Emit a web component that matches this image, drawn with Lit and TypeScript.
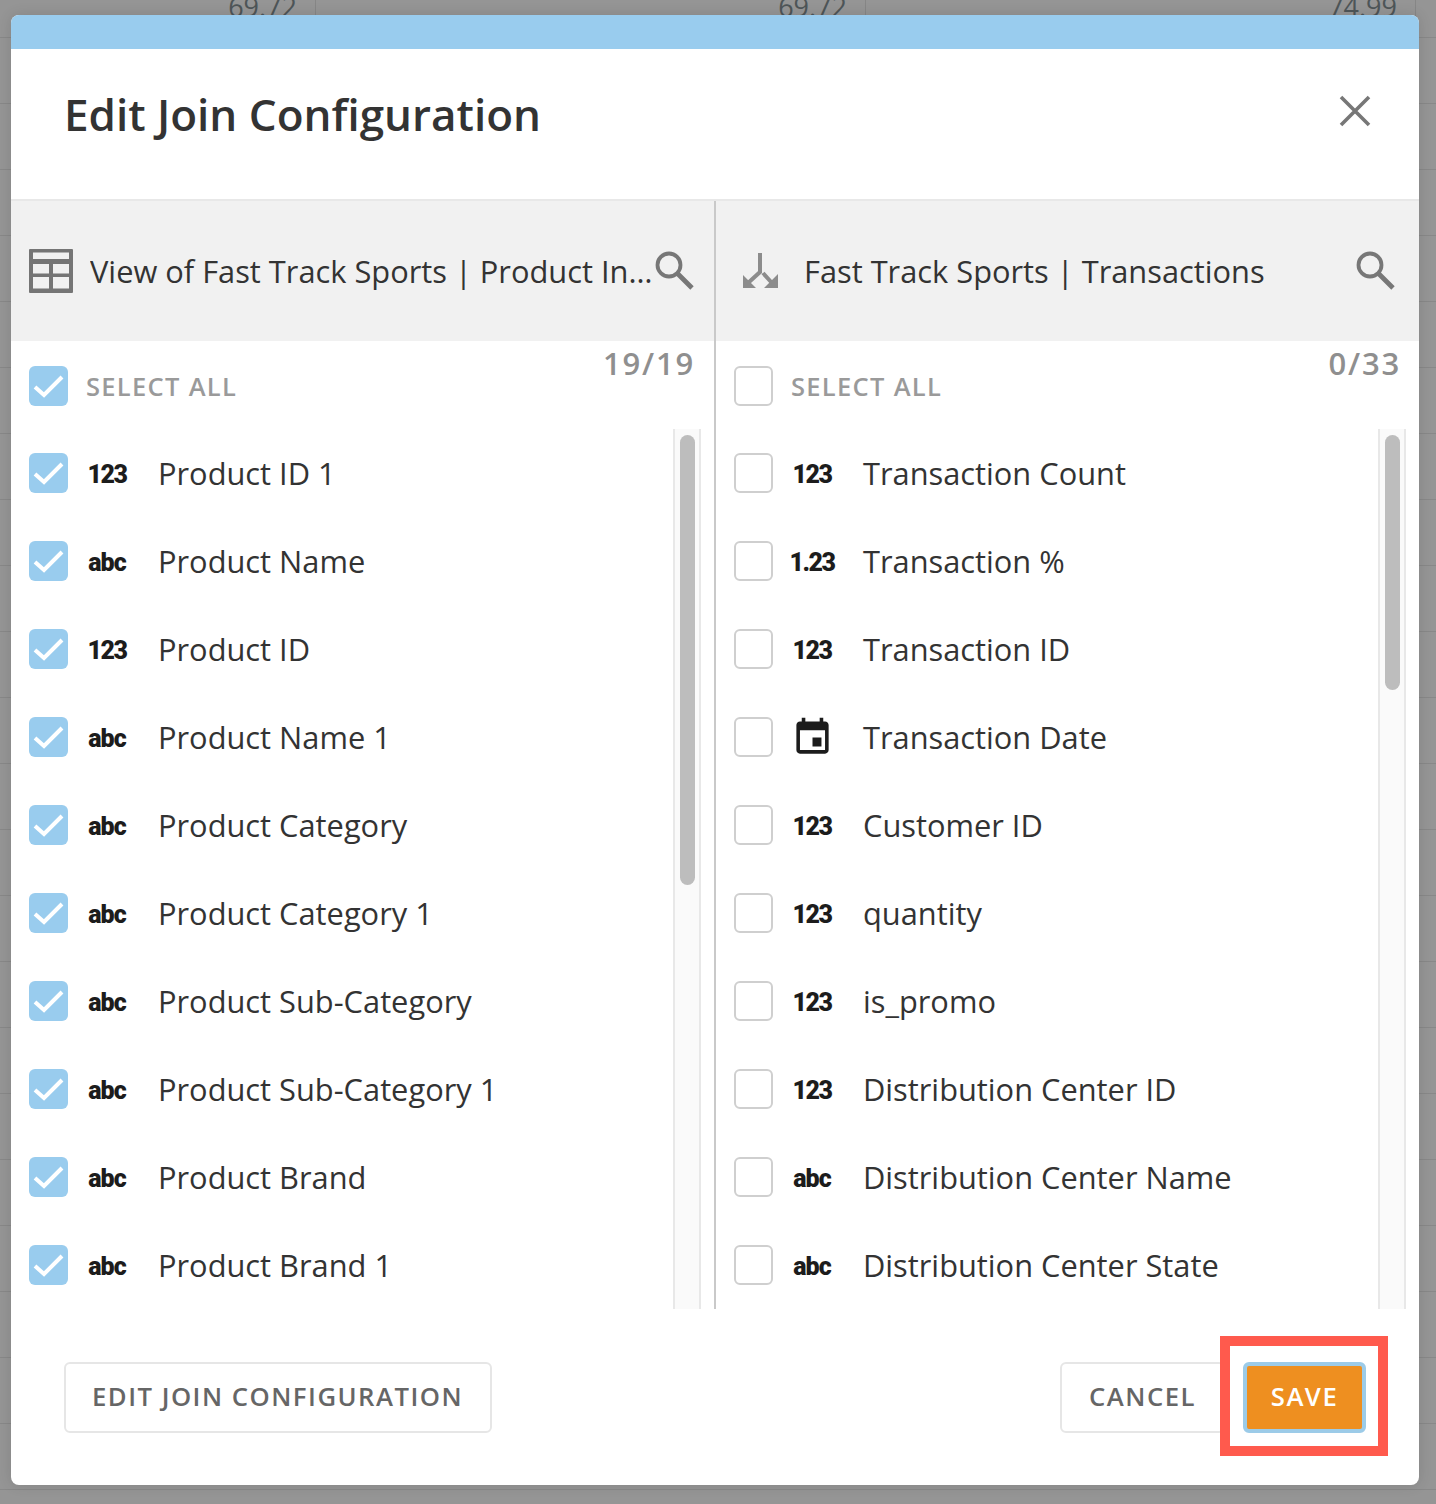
import { LitElement, html, css, svg } from "lit";
import { customElement } from "lit/decorators.js";

type Field = [string, string];
const left: Field[] = [
  ["123", "Product ID 1"], ["abc", "Product Name"], ["123", "Product ID"], ["abc", "Product Name 1"],
  ["abc", "Product Category"], ["abc", "Product Category 1"], ["abc", "Product Sub-Category"],
  ["abc", "Product Sub-Category 1"], ["abc", "Product Brand"], ["abc", "Product Brand 1"],
];
const right: Field[] = [
  ["123", "Transaction Count"], ["1.23", "Transaction %"], ["123", "Transaction ID"], ["date", "Transaction Date"],
  ["123", "Customer ID"], ["123", "quantity"], ["123", "is_promo"], ["123", "Distribution Center ID"],
  ["abc", "Distribution Center Name"], ["abc", "Distribution Center State"],
];

const searchIcon = html`<svg class="search" width="40" height="40" viewBox="0 0 40 40" fill="none" stroke="#777" aria-hidden="true">
  <circle cx="14" cy="14" r="11.500" stroke-width="3.800"/><path d="M22.500 22.500 L37 37" stroke-width="4.800"/></svg>`;
const tableIcon = html`<svg class="src" width="44" height="44" viewBox="0 0 44 44" aria-hidden="true">
  <path fill="#757575" fill-rule="evenodd" d="M0 1a1 1 0 0 1 1-1h42a1 1 0 0 1 1 1v42a1 1 0 0 1-1 1H1a1 1 0 0 1-1-1V1zM4 3.500v6.500h36V3.500H4zM4 15v9.500h16V15H4zm20 0v9.500h16V15H24zM4 28v11.500h16V28H4zm20 0v11.500h16V28H24z"/></svg>`;
const mergeIcon = html`<svg class="src" width="44" height="44" viewBox="0 0 44 44" aria-hidden="true">
  <path d="M19 4 V23 L7 34 M22 24 L31 34" fill="none" stroke="#8c8c8c" stroke-width="4"/>
  <path fill="#8c8c8c" d="M2 26 V39 H15 Z M37 25 V39 H23 Z"/></svg>`;
const eventIcon = html`<svg width="43" height="43" viewBox="0 0 24 24" aria-hidden="true"><path fill="#1c1c1c" d="M17 12h-5v5h5v-5zM16 1v2H8V1H6v2H5c-1.110 0-1.990.9-1.990 2L3 19c0 1.100.89 2 2 2h14c1.100 0 2-.9 2-2V5c0-1.100-.9-2-2-2h-1V1h-2zm3 18H5V8h14v11z"/></svg>`;
const check = svg`<path d="M6 21 L15 29 L33 11" fill="none" stroke="#fff" stroke-width="4"/>`;

@customElement("app-root")
export class AppRoot extends LitElement {
  static styles = css`
    :host { display: block; position: relative; height: 1504px; overflow: hidden; background: #959595;
      font-family: "Open Sans", "Noto Sans", sans-serif; box-sizing: border-box; padding: 15px 17px 19px 11px; }
    * { box-sizing: border-box; }
    .backdrop { position: absolute; inset: 0; background-image: repeating-linear-gradient(to bottom, #888 0 1px, transparent 1px 66px); background-position: 0 37px; }
    .cells { display: grid; grid-template-columns: repeat(3, 550px); margin-left: -234px; }
    .cell { padding-right: 18px; border-right: 1px solid #868686; text-align: right; font-size: 27px; line-height: 30px; height: 52px; color: #4e5558; margin-top: -15px; padding-top: 7px; }
    .modal { position: relative; height: 1470px; background: #fff; border-radius: 8px; overflow: hidden; display: flex; flex-direction: column; box-shadow: 0 0 14px rgba(0,0,0,.12); }
    .bar { height: 34px; background: #99ccee; flex: none; }
    .head { height: 150px; flex: none; display: flex; align-items: flex-start; justify-content: space-between; padding: 35px 48px 0 53px; }
    h1 { margin: 0; font-size: 44px; line-height: 60px; font-weight: 600; color: #333; }
    .close { margin-top: 11px; }
    .cols { display: grid; grid-template-columns: 705px 703px; flex: none; height: 1110px; border-top: 2px solid #e8e8e8; }
    .col { display: flex; flex-direction: column; min-width: 0; overflow: hidden; }
    .col.first { border-right: 2px solid #c9c9c9; }
    .colhead { flex: none; height: 140px; background: #f1f1f1; display: flex; align-items: center; padding: 0 19px 0 18px; }
    .second .colhead { padding: 0 23px 0 25px; }
    .srchead { flex: 1; min-width: 0; white-space: nowrap; overflow: hidden; text-overflow: ellipsis; font-size: 30.800px; color: #333; line-height: 42px; }
    .first .srchead { margin-left: 17px; }
    .second .srchead { margin-left: 19px; }
    .search { flex: none; }
    .second .spacer { flex: none; width: 70px; }
    .all { flex: none; height: 88px; display: flex; padding: 25px 19px 0 18px; }
    .second .all { padding-right: 18px; }
    .box { flex: none; width: 39px; height: 40px; border-radius: 6px; display: block; }
    .box.on { background: #99ccee; }
    .box.off { background: #fff; border: 2px solid #cfcfcf; }
    .alltext { margin-left: 18px; font-size: 25.500px; line-height: 40px; font-weight: 600; color: #9a9a9a; letter-spacing: 1.300px; }
    .count { margin-left: auto; margin-top: -23px; font-size: 31px; line-height: 40px; font-weight: 600; color: #8f8f8f; letter-spacing: 1.800px; }
    .body { flex: 1; min-height: 0; display: flex; overflow: hidden; }
    .rows { flex: 1; min-width: 0; padding-left: 18px; }
    .row { height: 88px; display: flex; align-items: center; }
    .type { flex: none; width: 60px; margin: 4px 21px 0 9px; display: flex; justify-content: center; font-family: Roboto, sans-serif; font-weight: 900; font-size: 25px; line-height: 30px; color: #1c1c1c; letter-spacing: -1.500px; }
    .type.abc { letter-spacing: -1px; }
    .type.date { margin-top: 1px; }
    .name { font-size: 30.800px; line-height: 42px; color: #333; white-space: nowrap; }
    .track { flex: none; width: 28px; margin-right: 13px; background: #fafafa; border-left: 2px solid #e8e8e8; border-right: 2px solid #e8e8e8; padding: 6px 5px 0; }
    .thumb { width: 15px; border-radius: 8px; background: #bdbdbd; }
    .foot { flex: 1; display: flex; align-items: flex-start; justify-content: space-between; padding: 53px 53px 0; }
    .btn { height: 71px; border-radius: 6px; border: 2px solid #e6e6e6; background: #fff; color: #666; font: 600 25.700px/65px "Open Sans", sans-serif; letter-spacing: 1.500px; padding: 0 26px; }
    .edit { width: 428px; }
    .actions { display: flex; gap: 18px; }
    .cancel { width: 165px; padding-left: 27px; }
    .save { width: 123px; padding: 0; text-align: center; background: #ee8f20; border: 4px solid #9ccbe8; color: #fff; line-height: 61px; }
    .mark { position: absolute; left: 1220px; top: 1336px; width: 168px; height: 120px; border: 10px solid #ff5a4d; }
    .mark-fill { position: absolute; left: 1230px; top: 1346px; width: 13px; height: 100px; background: #fff; }
  `;

  private renderCol(cls: string, iconEl: unknown, title: string, allOn: boolean, count: string, fields: Field[], on: boolean, thumb: number) {
    return html`<section class="col ${cls}">
      <div class="colhead">${iconEl}<div class="srchead">${title}</div>${cls === "second" ? html`<div class="spacer"></div>` : ""}${searchIcon}</div>
      <div class="all">${this.box(allOn)}<span class="alltext">SELECT ALL</span><span class="count">${count}</span></div>
      <div class="body">
        <div class="rows">${fields.map(([t, n]) => html`<div class="row">${this.box(on)}<span class="type ${t === "date" ? "date" : t === "abc" ? "abc" : ""}">${t === "date" ? eventIcon : t}</span><span class="name">${n}</span></div>`)}</div>
        <div class="track"><div class="thumb" style="height:${thumb}px"></div></div>
      </div>
    </section>`;
  }

  private box(on: boolean) {
    return on
      ? html`<svg class="box on" viewBox="0 0 39 40" aria-hidden="true">${check}</svg>`
      : html`<span class="box off"></span>`;
  }

  render() {
    return html`
      <div class="backdrop"><div class="cells"><div class="cell">69.72</div><div class="cell">69.72</div><div class="cell">74.99</div></div></div>
      <main class="modal">
        <div class="bar"></div>
        <header class="head"><h1>Edit Join Configuration</h1>
          <svg class="close" width="32" height="32" viewBox="0 0 32 32" aria-hidden="true"><path d="M2 2 L30 30 M30 2 L2 30" stroke="#777" stroke-width="3.600" fill="none"/></svg>
        </header>
        <div class="cols">
          ${this.renderCol("first", tableIcon, "View of Fast Track Sports | Product Inventory", true, "19/19", left, true, 450)}
          ${this.renderCol("second", mergeIcon, "Fast Track Sports | Transactions", false, "0/33", right, false, 255)}
        </div>
        <footer class="foot">
          <div class="btn edit">EDIT JOIN CONFIGURATION</div>
          <div class="actions"><div class="btn cancel">CANCEL</div><div class="btn save">SAVE</div></div>
        </footer>
      </main>
      <div class="mark-fill"></div>
      <div class="mark"></div>`;
  }
}
